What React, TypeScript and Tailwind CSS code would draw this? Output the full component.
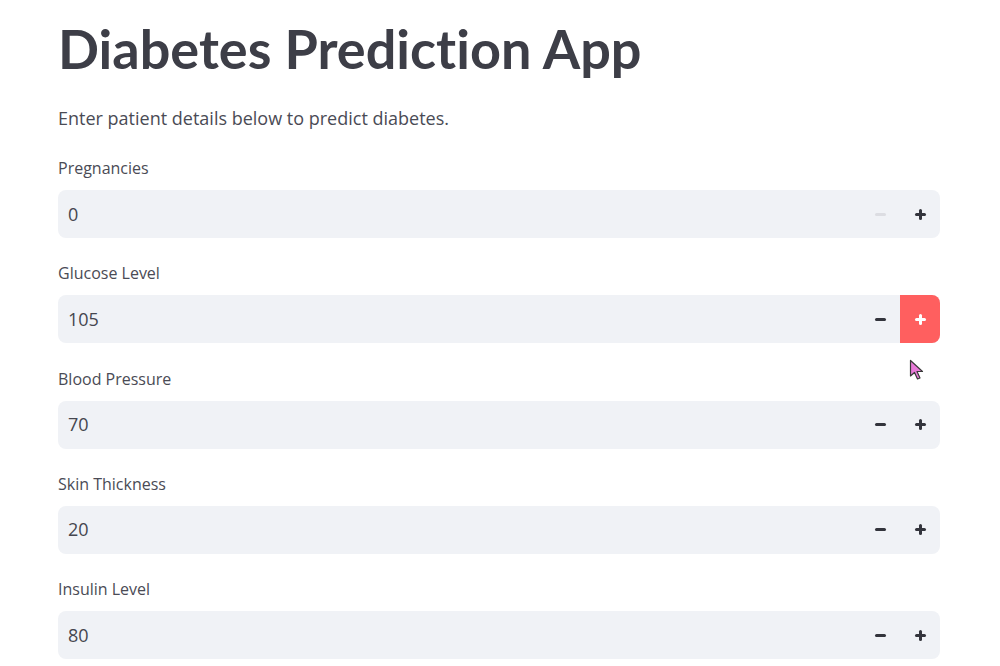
import React from 'react';

const FIELDS = [
    { label: 'Pregnancies', value: '0', minDisabled: true },
    { label: 'Glucose Level', value: '105', plusActive: true },
    { label: 'Blood Pressure', value: '70' },
    { label: 'Skin Thickness', value: '20' },
    { label: 'Insulin Level', value: '80' },
];

function NumberField({ label, value, minDisabled, plusActive }: { label: string; value: string; minDisabled?: boolean; plusActive?: boolean }) {
    return (
        <div className="flex flex-col">
            <label className="text-[16px] leading-[20px] text-[#4a4b55] mb-[12px]">{label}</label>
            <div className="flex h-[48px] rounded-[8px] bg-[#f0f2f6] overflow-hidden">
                <div className="flex-1 flex items-center pl-[10px] text-[18px] text-[#45464f]">{value}</div>
                <button className="w-[40px] flex items-center justify-center">
                    <span className={`block w-[11px] h-[3px] rounded-sm ${minDisabled ? 'bg-[#dcdde2]' : 'bg-[#33343c]'}`} />
                </button>
                <button className={`w-[40px] flex items-center justify-center ${plusActive ? 'bg-[#ff5f5f]' : ''}`}>
                    <span className="relative block w-[11px] h-[11px]">
                        <span className={`absolute left-0 top-[4px] w-[11px] h-[3px] rounded-sm ${plusActive ? 'bg-white' : 'bg-[#33343c]'}`} />
                        <span className={`absolute top-0 left-[4px] h-[11px] w-[3px] rounded-sm ${plusActive ? 'bg-white' : 'bg-[#33343c]'}`} />
                    </span>
                </button>
            </div>
        </div>
    );
}

export default function App() {
    return (
        <div className="relative w-[1000px] h-[666px] overflow-hidden bg-white" style={{ fontFamily: '"Open Sans", "Noto Sans", sans-serif' }}>
            <div className="w-[882px] ml-[58px] pt-[16px]">
                <h1 className="text-[54px] leading-[66px] font-bold text-[#3d3e47] [font-variant-ligatures:none]" style={{ fontFamily: 'Lato, "Noto Sans", sans-serif' }}>Diabetes Prediction App</h1>
                <p className="mt-[24px] text-[18px] leading-[24px] text-[#4a4b55]">Enter patient details below to predict diabetes.</p>
                <div className="mt-[28px] flex flex-col gap-[25.3px]">
                    {FIELDS.map(f => (
                        <NumberField key={f.label} {...f} />
                    ))}
                </div>
            </div>
            {/* mouse cursor */}
            <svg className="absolute left-[909px] top-[359px]" width="16" height="22" viewBox="0 0 16 22">
                <path d="M1.5 1.5 L1.5 17 L5.5 13.5 L8.5 20 L11 19 L8 12.5 L13.5 12.5 Z" fill="#e87ad8" stroke="#3a3a3a" strokeWidth="1.2" strokeLinejoin="round" />
            </svg>
        </div>
    );
}
